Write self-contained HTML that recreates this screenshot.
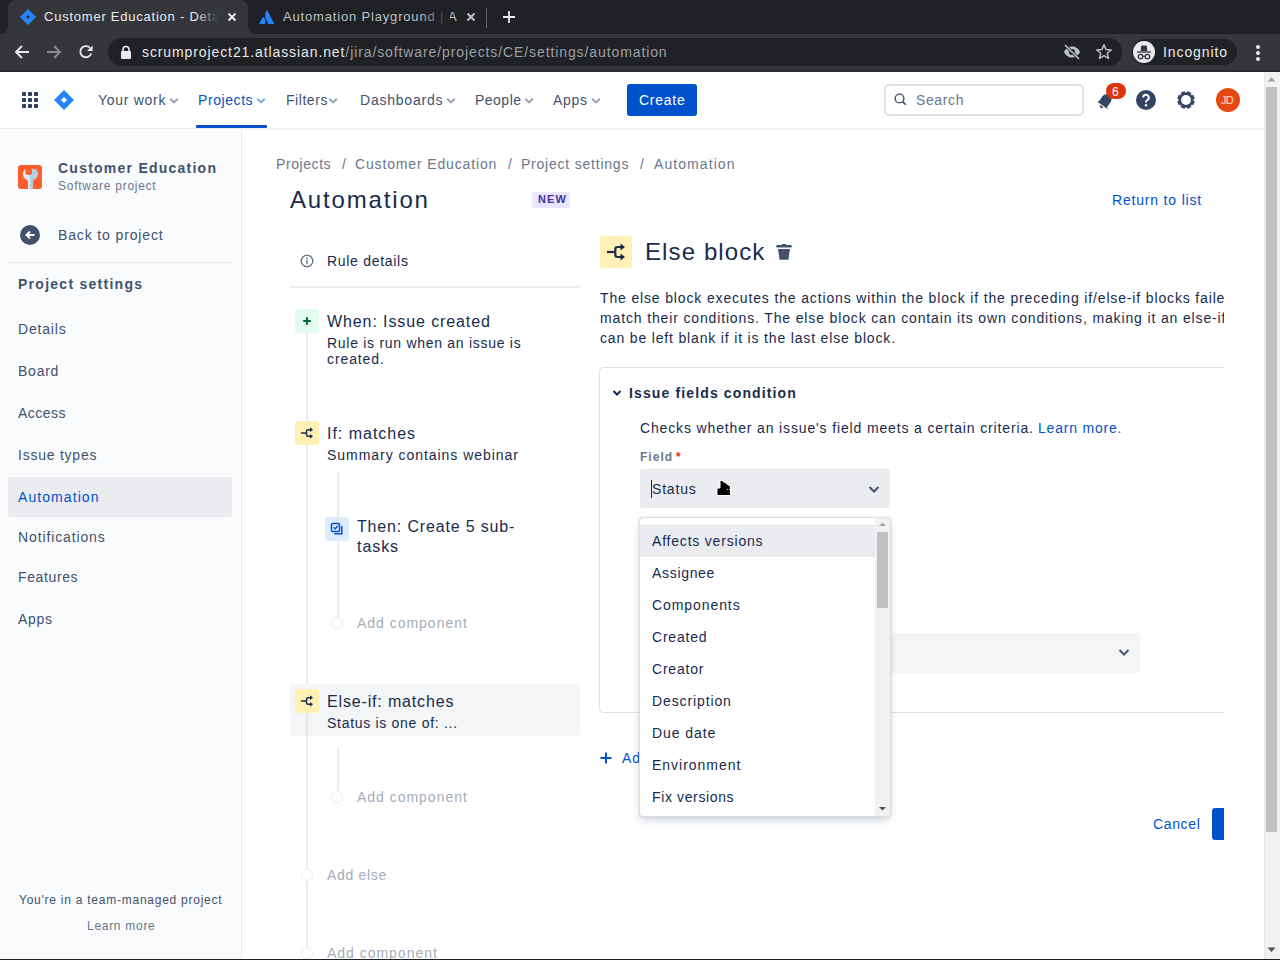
<!DOCTYPE html><html><head><meta charset="utf-8"><style>
*{margin:0;padding:0;box-sizing:border-box}
html,body{width:1280px;height:960px;overflow:hidden;background:#fff;font-family:"Liberation Sans",sans-serif}
.t{position:absolute;white-space:nowrap;line-height:1}
.a{position:absolute}
</style></head><body><div class="a" style="left:0;top:0;width:1280px;height:34px;background:#202124"></div>
<div class="a" style="left:8px;top:0;width:240px;height:34px;background:#35363a;border-radius:8px 8px 0 0"></div>
<div class="a" style="left:0;top:26px;width:8px;height:8px;background:#35363a"></div><div class="a" style="left:0;top:18px;width:8px;height:16px;background:#202124;border-bottom-right-radius:8px"></div>
<div class="a" style="left:248px;top:26px;width:8px;height:8px;background:#35363a"></div><div class="a" style="left:248px;top:18px;width:8px;height:16px;background:#202124;border-bottom-left-radius:8px"></div>
<svg class="a" style="left:20px;top:9px" width="16" height="16" viewBox="0 0 16 16"><path d="M8 0 L16 8 L8 16 L0 8Z" fill="#2684FF"/><path d="M8 6 L10 8 L8 10 L6 8Z" fill="#35363a"/></svg>
<div class="t " style="left:44px;top:10.00px;font-size:13px;color:#e8eaed;font-weight:400;letter-spacing:0.766px;">Customer Education - Deta</div>
<div class="a" style="left:196px;top:8px;width:26px;height:20px;background:linear-gradient(90deg,rgba(53,54,58,0),#35363a 85%)"></div>
<svg class="a" style="left:227px;top:12px" width="10" height="10" viewBox="0 0 10 10"><path d="M1.5 1.5L8.5 8.5M8.5 1.5L1.5 8.5" stroke="#e8eaed" stroke-width="2"/></svg>
<svg class="a" style="left:259px;top:10px" width="16" height="14" viewBox="0 0 16 14"><path d="M4.5 7.2c-.2-.3-.6-.3-.8 0L0 14h5.6c.2 0 .4-.1.5-.3 1-2.2.4-5.3-1.6-6.5zM7.6 0.5C5.6 3.6 5.8 7 7.1 9.6l2.2 4.1c.1.2.3.3.5.3H15.4L8.3.5c-.2-.3-.6-.3-.7 0z" fill="#2684FF"/></svg>
<div class="t " style="left:283px;top:10.00px;font-size:13px;color:#bdc1c6;font-weight:400;letter-spacing:0.828px;">Automation Playground | A</div>
<div class="a" style="left:420px;top:8px;width:30px;height:20px;background:linear-gradient(90deg,rgba(32,33,36,0),#202124)"></div>
<svg class="a" style="left:466px;top:12px" width="10" height="10" viewBox="0 0 10 10"><path d="M1.5 1.5L8.5 8.5M8.5 1.5L1.5 8.5" stroke="#bdc1c6" stroke-width="2"/></svg>
<div class="a" style="left:486px;top:8px;width:1px;height:20px;background:#5f6368"></div>
<svg class="a" style="left:502px;top:10px" width="14" height="14" viewBox="0 0 14 14"><path d="M7 1V13M1 7H13" stroke="#e8eaed" stroke-width="1.8"/></svg>
<div class="a" style="left:0;top:34px;width:1280px;height:38px;background:#35363a"></div>
<div class="a" style="left:0;top:70px;width:1280px;height:2px;background:#2a2b2e"></div>
<svg class="a" style="left:14px;top:44px" width="16" height="16" viewBox="0 0 16 16"><path d="M15 8H2.5M8 2L2 8L8 14" stroke="#e8eaed" stroke-width="1.8" fill="none"/></svg>
<svg class="a" style="left:46px;top:44px" width="16" height="16" viewBox="0 0 16 16"><path d="M1 8H13.5M8 2L14 8L8 14" stroke="#8a8b8e" stroke-width="1.8" fill="none"/></svg>
<svg class="a" style="left:78px;top:44px" width="16" height="16" viewBox="0 0 16 16"><path d="M13.2 9.5A5.6 5.6 0 1 1 11.8 3.6" stroke="#e8eaed" stroke-width="1.8" fill="none"/><path d="M14.5 1.5V7H9Z" fill="#e8eaed"/></svg>
<div class="a" style="left:108px;top:38px;width:1014px;height:28px;background:#202124;border-radius:14px"></div>
<svg class="a" style="left:120px;top:45px" width="12" height="14" viewBox="0 0 12 14"><rect x="1" y="6" width="10" height="8" rx="1" fill="#e8eaed"/><path d="M3 6.5V4.5a3 3 0 0 1 6 0V6.5" stroke="#e8eaed" stroke-width="1.6" fill="none"/></svg>
<div class="t" style="left:142px;top:45px;font-size:14px;color:#e8eaed;letter-spacing:0.898px">scrumproject21.atlassian.net<span style="color:#9aa0a6">/jira/software/projects/CE/settings/automation</span></div>
<svg class="a" style="left:1062px;top:43px" width="20" height="18" viewBox="0 0 20 18"><path d="M2 9C4 5 7 3.5 10 3.5S16 5 18 9C16 13 13 14.5 10 14.5S4 13 2 9Z" fill="#bdc1c6"/><circle cx="10" cy="9" r="3" fill="#202124"/><path d="M3 2L17 16" stroke="#202124" stroke-width="3"/><path d="M3 2L17 16" stroke="#bdc1c6" stroke-width="1.6"/></svg>
<svg class="a" style="left:1095px;top:43px" width="18" height="18" viewBox="0 0 18 18"><path d="M9 1.8L11.1 6.6L16.2 7L12.3 10.3L13.5 15.4L9 12.7L4.5 15.4L5.7 10.3L1.8 7L6.9 6.6Z" stroke="#bdc1c6" stroke-width="1.5" fill="none" stroke-linejoin="round"/></svg>
<div class="a" style="left:1132px;top:39px;width:105px;height:26px;background:#202124;border-radius:13px"></div>
<div class="a" style="left:1133px;top:41px;width:22px;height:22px;background:#e8eaed;border-radius:50%"></div>
<svg class="a" style="left:1133px;top:41px" width="22" height="22" viewBox="0 0 22 22"><path d="M8.2 5.2Q8.3 4.6 8.9 4.6H13.1Q13.7 4.6 13.8 5.2L14.4 10H7.6Z" fill="#35363a"/><rect x="4" y="10.4" width="14" height="1.3" fill="#35363a"/><circle cx="7.6" cy="15.6" r="2.3" stroke="#35363a" stroke-width="1.3" fill="none"/><circle cx="14.4" cy="15.6" r="2.3" stroke="#35363a" stroke-width="1.3" fill="none"/><path d="M9.9 15.3h2.2" stroke="#35363a" stroke-width="1.1"/></svg>
<div class="t " style="left:1163px;top:45.15px;font-size:14px;color:#e8eaed;font-weight:400;letter-spacing:0.908px;">Incognito</div>
<div class="a" style="left:1256px;top:45px;width:4px;height:4px;border-radius:50%;background:#e8eaed"></div><div class="a" style="left:1256px;top:51px;width:4px;height:4px;border-radius:50%;background:#e8eaed"></div><div class="a" style="left:1256px;top:57px;width:4px;height:4px;border-radius:50%;background:#e8eaed"></div>
<div class="a" style="left:0;top:72px;width:1264px;height:56px;background:#fff"></div>
<div class="a" style="left:0;top:128px;width:1264px;height:1px;background:#EDEEF0"></div><div class="a" style="left:0;top:129px;width:1264px;height:2px;background:linear-gradient(rgba(9,30,66,.03),rgba(9,30,66,0))"></div>
<svg class="a" style="left:22px;top:92px" width="16" height="16" viewBox="0 0 16 16"><rect x="0" y="0" width="4" height="4" rx="0.8" fill="#2E3F5F"/><rect x="0" y="6" width="4" height="4" rx="0.8" fill="#2E3F5F"/><rect x="0" y="12" width="4" height="4" rx="0.8" fill="#2E3F5F"/><rect x="6" y="0" width="4" height="4" rx="0.8" fill="#2E3F5F"/><rect x="6" y="6" width="4" height="4" rx="0.8" fill="#2E3F5F"/><rect x="6" y="12" width="4" height="4" rx="0.8" fill="#2E3F5F"/><rect x="12" y="0" width="4" height="4" rx="0.8" fill="#2E3F5F"/><rect x="12" y="6" width="4" height="4" rx="0.8" fill="#2E3F5F"/><rect x="12" y="12" width="4" height="4" rx="0.8" fill="#2E3F5F"/></svg>
<svg class="a" style="left:54px;top:90px" width="20" height="20" viewBox="0 0 20 20"><path d="M10 0L20 10L10 20L0 10Z" fill="#2684FF"/><path d="M10 7L13 10L10 13L7 10Z" fill="#fff"/></svg>
<div class="t " style="left:98px;top:93.15px;font-size:14px;color:#42526E;font-weight:400;letter-spacing:0.720px;">Your work</div>
<svg class="a" style="left:169px;top:97px" width="10" height="8" viewBox="0 0 10 8"><path d="M1.2 1.8L5 5.4L8.8 1.8" stroke="#97A0AF" stroke-width="2" fill="none"/></svg>
<div class="t " style="left:198px;top:93.15px;font-size:14px;color:#0052CC;font-weight:400;letter-spacing:0.576px;">Projects</div>
<svg class="a" style="left:256px;top:97px" width="10" height="8" viewBox="0 0 10 8"><path d="M1.2 1.8L5 5.4L8.8 1.8" stroke="#7FA7E6" stroke-width="2" fill="none"/></svg>
<div class="a" style="left:196px;top:125px;width:71px;height:3px;background:#0052CC;border-radius:1px"></div>
<div class="t " style="left:286px;top:93.15px;font-size:14px;color:#42526E;font-weight:400;letter-spacing:0.551px;">Filters</div>
<svg class="a" style="left:328px;top:97px" width="10" height="8" viewBox="0 0 10 8"><path d="M1.2 1.8L5 5.4L8.8 1.8" stroke="#97A0AF" stroke-width="2" fill="none"/></svg>
<div class="t " style="left:360px;top:93.15px;font-size:14px;color:#42526E;font-weight:400;letter-spacing:0.780px;">Dashboards</div>
<svg class="a" style="left:446px;top:97px" width="10" height="8" viewBox="0 0 10 8"><path d="M1.2 1.8L5 5.4L8.8 1.8" stroke="#97A0AF" stroke-width="2" fill="none"/></svg>
<div class="t " style="left:475px;top:93.15px;font-size:14px;color:#42526E;font-weight:400;letter-spacing:0.487px;">People</div>
<svg class="a" style="left:524px;top:97px" width="10" height="8" viewBox="0 0 10 8"><path d="M1.2 1.8L5 5.4L8.8 1.8" stroke="#97A0AF" stroke-width="2" fill="none"/></svg>
<div class="t " style="left:553px;top:93.15px;font-size:14px;color:#42526E;font-weight:400;letter-spacing:0.688px;">Apps</div>
<svg class="a" style="left:591px;top:97px" width="10" height="8" viewBox="0 0 10 8"><path d="M1.2 1.8L5 5.4L8.8 1.8" stroke="#97A0AF" stroke-width="2" fill="none"/></svg>
<div class="a" style="left:627px;top:84px;width:70px;height:32px;background:#0052CC;border-radius:3px"></div>
<div class="t " style="left:639px;top:93.15px;font-size:14px;color:#fff;font-weight:400;letter-spacing:0.750px;">Create</div>
<div class="a" style="left:884px;top:84px;width:200px;height:32px;border:2px solid #DFE0E3;border-radius:5px;background:#fff"></div>
<svg class="a" style="left:894px;top:93px" width="13" height="13" viewBox="0 0 13 13"><circle cx="5.5" cy="5.5" r="4.4" stroke="#42526E" stroke-width="1.4" fill="none"/><path d="M8.6 8.6L11.8 11.8" stroke="#42526E" stroke-width="1.6"/></svg>
<div class="t " style="left:916px;top:93.15px;font-size:14px;color:#6B778C;font-weight:400;letter-spacing:0.625px;">Search</div>
<svg class="a" style="left:1096px;top:90px" width="20" height="20" viewBox="0 0 20 20"><g transform="rotate(35 10 10)"><path d="M5 15V9a5 5 0 0 1 10 0v6l1.5 1.5H3.5Z" fill="#344563"/><path d="M8 17.5h4a2 2 0 0 1-4 0z" fill="#344563"/></g></svg>
<div class="a" style="left:1106px;top:83px;width:20px;height:16px;border-radius:8px;background:#DE350B;border:0px solid #fff"></div>
<div class="t " style="left:1112px;top:85.84px;font-size:12px;color:#fff;font-weight:400;letter-spacing:0.969px;">6</div>
<svg class="a" style="left:1136px;top:90px" width="20" height="20" viewBox="0 0 20 20"><circle cx="10" cy="10" r="10" fill="#344563"/><path d="M7.2 7.6a2.8 2.8 0 1 1 4.2 2.4c-.9.5-1.4 1-1.4 2v.6" stroke="#fff" stroke-width="2" fill="none"/><circle cx="10" cy="15.3" r="1.2" fill="#fff"/></svg>
<svg class="a" style="left:1176px;top:90px" width="20" height="20" viewBox="0 0 20 20"><polygon points="18.44,11.65 17.13,14.80 15.04,14.72 14.72,15.04 14.80,17.13 11.65,18.44 10.23,16.90 9.77,16.90 8.35,18.44 5.20,17.13 5.28,15.04 4.96,14.72 2.87,14.80 1.56,11.65 3.10,10.23 3.10,9.77 1.56,8.35 2.87,5.20 4.96,5.28 5.28,4.96 5.20,2.87 8.35,1.56 9.77,3.10 10.23,3.10 11.65,1.56 14.80,2.87 14.72,4.96 15.04,5.28 17.13,5.20 18.44,8.35 16.90,9.77 16.90,10.23" fill="#344563" stroke="#344563" stroke-width="0.6" stroke-linejoin="round"/><circle cx="10" cy="10" r="4.9" fill="#fff"/></svg>
<div class="a" style="left:1216px;top:88px;width:24px;height:24px;border-radius:50%;background:#E5490F"></div>
<div class="t " style="left:1221px;top:94.69px;font-size:11px;color:#FFE0CC;font-weight:400;letter-spacing:-0.859px;">JD</div>
<div class="a" style="left:1264px;top:72px;width:16px;height:888px;background:#F1F1F1;border-left:1px solid #E8E8E8"></div>
<div class="a" style="left:1266px;top:87px;width:11px;height:745px;background:#C1C1C1"></div>
<svg class="a" style="left:1266px;top:75px" width="11" height="8" viewBox="0 0 11 8"><path d="M1.5 6.5L5.5 2L9.5 6.5Z" fill="#A3A3A3"/></svg>
<svg class="a" style="left:1266px;top:946px" width="11" height="8" viewBox="0 0 11 8"><path d="M1.5 1.5L5.5 6L9.5 1.5Z" fill="#505050"/></svg>
<div class="a" style="left:0;top:129px;width:241px;height:831px;background:#FAFBFC"></div>
<div class="a" style="left:241px;top:129px;width:1px;height:831px;background:#E9EAEB"></div>
<div class="a" style="left:18px;top:165px;width:24px;height:24px;border-radius:3px;background:#FF5E2C"></div>
<svg class="a" style="left:18px;top:165px" width="24" height="24" viewBox="0 0 24 24"><path d="M7.5 4.2C5.6 5.4 4.6 7.5 4.9 9.8c.3 2.2 1.8 4 3.8 4.9c1 .5 1.3 1.2 1.3 2.2V24h4.7v-7.1c0-1 .4-1.7 1.3-2.2c2-1 3.5-2.7 3.8-4.9c.3-2.3-.7-4.4-2.6-5.6V8.3a2.1 2.1 0 0 1-4.2 0V3.4l-.9-.1l-.8.1V8.3a2.1 2.1 0 0 1-3.9.3Z" fill="#DCEFF8"/><path d="M13.7 3.6V8.3a2.1 2.1 0 0 1-2.1 2.1V24h2.8V16.9c0-1 .4-1.7 1.3-2.2c2-1 3.5-2.7 3.8-4.9c.3-2.3-.7-4.4-2.6-5.6Z" fill="#B3D1E3"/><path d="M9.6 2V8.3a2.05 2.05 0 0 0 4.1 0V2Z" fill="#FF5E2C"/></svg>
<div class="t " style="left:58px;top:161.15px;font-size:14px;color:#42526E;font-weight:700;letter-spacing:1.238px;">Customer Education</div>
<div class="t " style="left:58px;top:179.84px;font-size:12px;color:#6B778C;font-weight:400;letter-spacing:0.731px;">Software project</div>
<div class="a" style="left:20px;top:225px;width:20px;height:20px;border-radius:50%;background:#42526E"></div>
<svg class="a" style="left:20px;top:225px" width="20" height="20" viewBox="0 0 20 20"><path d="M14.5 10H7M10 6.5L6.5 10L10 13.5" stroke="#fff" stroke-width="2" fill="none"/></svg>
<div class="t " style="left:58px;top:228.15px;font-size:14px;color:#42526E;font-weight:400;letter-spacing:0.864px;">Back to project</div>
<div class="a" style="left:8px;top:262px;width:224px;height:1px;background:#E4E6EA"></div>
<div class="t " style="left:18px;top:276.65px;font-size:14px;color:#42526E;font-weight:700;letter-spacing:1.268px;">Project settings</div>
<div class="t " style="left:18px;top:322.15px;font-size:14px;color:#42526E;font-weight:400;letter-spacing:0.821px;">Details</div>
<div class="t " style="left:18px;top:364.15px;font-size:14px;color:#42526E;font-weight:400;letter-spacing:0.759px;">Board</div>
<div class="t " style="left:18px;top:406.15px;font-size:14px;color:#42526E;font-weight:400;letter-spacing:0.469px;">Access</div>
<div class="t " style="left:18px;top:448.15px;font-size:14px;color:#42526E;font-weight:400;letter-spacing:0.766px;">Issue types</div>
<div class="a" style="left:8px;top:477px;width:224px;height:40px;background:#EBECF0;border-radius:3px"></div>
<div class="t " style="left:18px;top:490.15px;font-size:14px;color:#0052CC;font-weight:400;letter-spacing:1.073px;">Automation</div>
<div class="t " style="left:18px;top:530.15px;font-size:14px;color:#42526E;font-weight:400;letter-spacing:0.875px;">Notifications</div>
<div class="t " style="left:18px;top:570.15px;font-size:14px;color:#42526E;font-weight:400;letter-spacing:0.619px;">Features</div>
<div class="t " style="left:18px;top:612.15px;font-size:14px;color:#42526E;font-weight:400;letter-spacing:0.688px;">Apps</div>
<div class="t " style="left:19px;top:893.84px;font-size:12px;color:#42526E;font-weight:400;letter-spacing:0.753px;">You&#x27;re in a team-managed project</div>
<div class="t " style="left:87px;top:919.84px;font-size:12px;color:#6B778C;font-weight:400;letter-spacing:0.713px;">Learn more</div>
<div class="t " style="left:276px;top:157.15px;font-size:14px;color:#6B778C;font-weight:400;letter-spacing:0.576px;">Projects</div>
<div class="t " style="left:342px;top:157.15px;font-size:14px;color:#6B778C;font-weight:400;letter-spacing:0.828px;">/</div>
<div class="t " style="left:355px;top:157.15px;font-size:14px;color:#6B778C;font-weight:400;letter-spacing:0.853px;">Customer Education</div>
<div class="t " style="left:508px;top:157.15px;font-size:14px;color:#6B778C;font-weight:400;letter-spacing:0.828px;">/</div>
<div class="t " style="left:521px;top:157.15px;font-size:14px;color:#6B778C;font-weight:400;letter-spacing:0.779px;">Project settings</div>
<div class="t " style="left:640px;top:157.15px;font-size:14px;color:#6B778C;font-weight:400;letter-spacing:0.828px;">/</div>
<div class="t " style="left:654px;top:157.15px;font-size:14px;color:#6B778C;font-weight:400;letter-spacing:1.073px;">Automation</div>
<div class="t " style="left:290px;top:187.68px;font-size:24px;color:#172B4D;font-weight:400;letter-spacing:1.839px;">Automation</div>
<div class="a" style="left:532px;top:192px;width:38px;height:16px;background:#EAE6FF;border-radius:3px"></div>
<div class="t " style="left:538px;top:193.69px;font-size:11px;color:#403294;font-weight:700;letter-spacing:1.068px;">NEW</div>
<div class="t " style="left:1112px;top:193.15px;font-size:14px;color:#0052CC;font-weight:400;letter-spacing:0.815px;">Return to list</div>
<svg class="a" style="left:300px;top:254px" width="14" height="14" viewBox="0 0 14 14"><circle cx="7" cy="7" r="5.8" stroke="#6B778C" stroke-width="1.4" fill="none"/><rect x="6.3" y="6" width="1.4" height="4.2" fill="#6B778C"/><circle cx="7" cy="4.3" r="0.9" fill="#6B778C"/></svg>
<div class="t " style="left:327px;top:254.15px;font-size:14px;color:#172B4D;font-weight:400;letter-spacing:0.704px;">Rule details</div>
<div class="a" style="left:290px;top:286px;width:290px;height:2px;background:#EBECF0"></div>
<div class="a" style="left:306px;top:332px;width:2px;height:628px;background:#EBECF0"></div>
<div class="a" style="left:290px;top:684px;width:290px;height:52px;background:#F4F5F7;border-radius:4px"></div>
<div class="a" style="left:306px;top:712px;width:2px;height:24px;background:#E4E6EA"></div>
<div class="a" style="left:295px;top:309px;width:24px;height:24px;background:#E3FCEF;border-radius:3px"></div>
<svg class="a" style="left:295px;top:309px" width="24" height="24" viewBox="0 0 24 24"><path d="M12 8.2V15.8M8.2 12H15.8" stroke="#006644" stroke-width="2"/></svg>
<div class="t " style="left:327px;top:313.96px;font-size:16px;color:#172B4D;font-weight:400;letter-spacing:0.896px;">When: Issue created</div>
<div class="t " style="left:327px;top:335.65px;font-size:14px;color:#172B4D;font-weight:400;letter-spacing:0.717px;">Rule is run when an issue is</div>
<div class="t " style="left:327px;top:351.65px;font-size:14px;color:#172B4D;font-weight:400;letter-spacing:0.900px;">created.</div>
<div class="a" style="left:295px;top:421px;width:24px;height:24px;background:#FFF0B3;border-radius:3px"></div>
<svg class="a" style="left:295px;top:421px" width="24" height="24" viewBox="-2 -2 36 36"><path d="M7 16H14.5" stroke="#172B4D" stroke-width="2.2"/><path d="M22 11H17.5Q15.3 11 15.3 13.2V18.8Q15.3 21 17.5 21H22" stroke="#172B4D" stroke-width="2.2" fill="none"/><path d="M20.5 7.5L25 11L20.5 14.5Z M20.5 17.5L25 21L20.5 24.5Z" fill="#172B4D"/></svg>
<div class="t " style="left:327px;top:425.96px;font-size:16px;color:#172B4D;font-weight:400;letter-spacing:0.980px;">If: matches</div>
<div class="t " style="left:327px;top:447.65px;font-size:14px;color:#172B4D;font-weight:400;letter-spacing:0.962px;">Summary contains webinar</div>
<div class="a" style="left:337px;top:472px;width:2px;height:151px;background:#EBECF0"></div>
<div class="a" style="left:325px;top:517px;width:24px;height:24px;background:#DEEBFF;border-radius:3px"></div>
<svg class="a" style="left:325px;top:517px" width="24" height="24" viewBox="0 0 24 24"><rect x="6.5" y="6.5" width="8" height="8" rx="1" stroke="#0052CC" stroke-width="1.5" fill="none"/><path d="M8.6 10.3L10.2 11.9L12.8 8.8" stroke="#0052CC" stroke-width="1.4" fill="none"/><path d="M16.8 9.2V16.8H9.2" stroke="#0052CC" stroke-width="1.5" fill="none"/></svg>
<div class="t " style="left:357px;top:518.96px;font-size:16px;color:#172B4D;font-weight:400;letter-spacing:0.840px;">Then: Create 5 sub-</div>
<div class="t " style="left:357px;top:538.96px;font-size:16px;color:#172B4D;font-weight:400;letter-spacing:0.938px;">tasks</div>
<div class="a" style="left:331px;top:617px;width:12px;height:12px;border-radius:50%;background:#fff;border:1.5px solid #EBECF0"></div>
<div class="t " style="left:357px;top:616.15px;font-size:14px;color:#A5ADBA;font-weight:400;letter-spacing:0.980px;">Add component</div>
<div class="a" style="left:295px;top:689px;width:24px;height:24px;background:#FFF0B3;border-radius:3px"></div>
<svg class="a" style="left:295px;top:689px" width="24" height="24" viewBox="-2 -2 36 36"><path d="M7 16H14.5" stroke="#172B4D" stroke-width="2.2"/><path d="M22 11H17.5Q15.3 11 15.3 13.2V18.8Q15.3 21 17.5 21H22" stroke="#172B4D" stroke-width="2.2" fill="none"/><path d="M20.5 7.5L25 11L20.5 14.5Z M20.5 17.5L25 21L20.5 24.5Z" fill="#172B4D"/></svg>
<div class="t " style="left:327px;top:693.96px;font-size:16px;color:#172B4D;font-weight:400;letter-spacing:0.842px;">Else-if: matches</div>
<div class="t " style="left:327px;top:716.15px;font-size:14px;color:#172B4D;font-weight:400;letter-spacing:0.704px;">Status is one of: ...</div>
<div class="a" style="left:337px;top:747px;width:2px;height:50px;background:#EBECF0"></div>
<div class="a" style="left:331px;top:791px;width:12px;height:12px;border-radius:50%;background:#fff;border:1.5px solid #EBECF0"></div>
<div class="t " style="left:357px;top:790.15px;font-size:14px;color:#A5ADBA;font-weight:400;letter-spacing:0.980px;">Add component</div>
<div class="a" style="left:301px;top:869px;width:12px;height:12px;border-radius:50%;background:#fff;border:1.5px solid #EBECF0"></div>
<div class="t " style="left:327px;top:868.15px;font-size:14px;color:#A5ADBA;font-weight:400;letter-spacing:0.688px;">Add else</div>
<div class="a" style="left:301px;top:947px;width:12px;height:12px;border-radius:50%;background:#fff;border:1.5px solid #EBECF0"></div>
<div class="t " style="left:327px;top:946.15px;font-size:14px;color:#A5ADBA;font-weight:400;letter-spacing:0.980px;">Add component</div>
<div class="a" style="left:600px;top:236px;width:32px;height:32px;background:#FFF0B3;border-radius:3px"></div>
<svg class="a" style="left:600px;top:236px" width="32" height="32" viewBox="0 0 32 32"><path d="M7 16H14.5" stroke="#172B4D" stroke-width="2.2"/><path d="M22 11H17.5Q15.3 11 15.3 13.2V18.8Q15.3 21 17.5 21H22" stroke="#172B4D" stroke-width="2.2" fill="none"/><path d="M20.5 7.5L25 11L20.5 14.5Z M20.5 17.5L25 21L20.5 24.5Z" fill="#172B4D"/></svg>
<div class="t " style="left:645px;top:239.68px;font-size:24px;color:#172B4D;font-weight:400;letter-spacing:1.106px;">Else block</div>
<svg class="a" style="left:776px;top:244px" width="16" height="16" viewBox="0 0 16 16"><rect x="0.2" y="0.9" width="15.6" height="2.7" rx="1.35" fill="#42526E"/><rect x="6" y="0" width="4" height="1.5" rx="0.6" fill="#42526E"/><path d="M2 5.1H14L12.4 15.7H3.6Z" fill="#42526E"/></svg>
<div class="a" style="left:0;top:0;width:1224px;height:960px;overflow:hidden">
<div class="t " style="left:600px;top:291.15px;font-size:14px;color:#172B4D;font-weight:400;letter-spacing:0.849px;">The else block executes the actions within the block if the preceding if/else-if blocks failed to</div>
<div class="t " style="left:600px;top:311.15px;font-size:14px;color:#172B4D;font-weight:400;letter-spacing:0.856px;">match their conditions. The else block can contain its own conditions, making it an else-if. It</div>
<div class="t " style="left:600px;top:331.15px;font-size:14px;color:#172B4D;font-weight:400;letter-spacing:0.831px;">can be left blank if it is the last else block.</div>
<div class="a" style="left:599px;top:367px;width:700px;height:346px;border:1px solid #DFE0E2;border-radius:4px"></div>
</div>
<svg class="a" style="left:612px;top:389px" width="10" height="8" viewBox="0 0 10 8"><path d="M1.5 2L5 5.5L8.5 2" stroke="#172B4D" stroke-width="2" fill="none"/></svg>
<div class="t " style="left:629px;top:386.15px;font-size:14px;color:#172B4D;font-weight:700;letter-spacing:1.128px;">Issue fields condition</div>
<div class="t " style="left:640px;top:420.65px;font-size:14px;color:#172B4D;font-weight:400;letter-spacing:0.855px;">Checks whether an issue&#x27;s field meets a certain criteria.</div>
<div class="t " style="left:1038px;top:420.65px;font-size:14px;color:#0052CC;font-weight:400;letter-spacing:0.803px;">Learn more.</div>
<div class="t " style="left:640px;top:450.84px;font-size:12px;color:#6B778C;font-weight:700;letter-spacing:1.034px;">Field</div>
<div class="t " style="left:676px;top:450.84px;font-size:12px;color:#DE350B;font-weight:700;letter-spacing:1.609px;">*</div>
<div class="a" style="left:640px;top:469px;width:250px;height:39px;background:#EBECF0;border-radius:3px"></div>
<div class="a" style="left:651px;top:480px;width:1px;height:18px;background:#172B4D"></div>
<div class="t " style="left:652px;top:482.15px;font-size:14px;color:#172B4D;font-weight:400;letter-spacing:0.820px;">Status</div>
<svg class="a" style="left:866px;top:481px" width="16" height="16" viewBox="0 0 16 16"><path d="M3.5 6L8 10.5L12.5 6" stroke="#42526E" stroke-width="2" fill="none"/></svg>
<div class="a" style="left:640px;top:633px;width:500px;height:40px;background:#F4F5F7;border-radius:3px"></div>
<svg class="a" style="left:1116px;top:644px" width="16" height="16" viewBox="0 0 16 16"><path d="M3.5 6L8 10.5L12.5 6" stroke="#42526E" stroke-width="2" fill="none"/></svg>
<svg class="a" style="left:599px;top:751px" width="14" height="14" viewBox="0 0 14 14"><path d="M7 1.5V12.5M1.5 7H12.5" stroke="#0052CC" stroke-width="2"/></svg>
<div class="t " style="left:622px;top:751.15px;font-size:14px;color:#0052CC;font-weight:400;letter-spacing:0.883px;">Add condition</div>
<div class="t " style="left:1153px;top:817.15px;font-size:14px;color:#0052CC;font-weight:400;letter-spacing:0.646px;">Cancel</div>
<div class="a" style="left:0;top:0;width:1224px;height:960px;overflow:hidden"><div class="a" style="left:1212px;top:808px;width:60px;height:32px;background:#0052CC;border-radius:3px"></div></div>
<div class="a" style="left:639px;top:517px;width:252px;height:300px;background:#fff;border:1px solid #DFE0E2;border-radius:4px;box-shadow:0 4px 8px -2px rgba(9,30,66,.25),0 0 1px rgba(9,30,66,.31);overflow:hidden"></div>
<div class="a" style="left:640px;top:525px;width:235px;height:32px;background:#EBECF0"></div>
<div class="a" style="left:875px;top:518px;width:15px;height:298px;background:#F1F1F1"></div>
<div class="a" style="left:877px;top:532px;width:11px;height:76px;background:#C1C1C1"></div>
<svg class="a" style="left:877px;top:520px" width="11" height="8" viewBox="0 0 11 8"><path d="M2 6L5.5 2.5L9 6Z" fill="#A3A3A3"/></svg>
<svg class="a" style="left:877px;top:805px" width="11" height="8" viewBox="0 0 11 8"><path d="M2 2L5.5 5.5L9 2Z" fill="#505050"/></svg>
<div class="t " style="left:652px;top:534.15px;font-size:14px;color:#172B4D;font-weight:400;letter-spacing:0.799px;">Affects versions</div>
<div class="t " style="left:652px;top:566.15px;font-size:14px;color:#172B4D;font-weight:400;letter-spacing:0.684px;">Assignee</div>
<div class="t " style="left:652px;top:598.15px;font-size:14px;color:#172B4D;font-weight:400;letter-spacing:0.923px;">Components</div>
<div class="t " style="left:652px;top:630.15px;font-size:14px;color:#172B4D;font-weight:400;letter-spacing:0.801px;">Created</div>
<div class="t " style="left:652px;top:662.15px;font-size:14px;color:#172B4D;font-weight:400;letter-spacing:0.792px;">Creator</div>
<div class="t " style="left:652px;top:694.15px;font-size:14px;color:#172B4D;font-weight:400;letter-spacing:0.885px;">Description</div>
<div class="t " style="left:652px;top:726.15px;font-size:14px;color:#172B4D;font-weight:400;letter-spacing:0.936px;">Due date</div>
<div class="t " style="left:652px;top:758.15px;font-size:14px;color:#172B4D;font-weight:400;letter-spacing:0.983px;">Environment</div>
<div class="t " style="left:652px;top:790.15px;font-size:14px;color:#172B4D;font-weight:400;letter-spacing:0.630px;">Fix versions</div>
<svg class="a" style="left:716px;top:479px" width="17" height="19" viewBox="0 0 17 19"><path d="M4 1.5H6.3L14.5 7.5V16.5H1V9H4Z" fill="#000" stroke="#fff" stroke-width="1" stroke-linejoin="round"/><path d="M6.8 2.2l1.2 1.6" stroke="#fff" stroke-width="0.9"/><circle cx="11.5" cy="10.5" r="0.6" fill="#fff"/><circle cx="13.5" cy="10.5" r="0.6" fill="#fff"/></svg>
<div class="a" style="left:0;top:959px;width:1280px;height:1px;background:#202124"></div></body></html>
